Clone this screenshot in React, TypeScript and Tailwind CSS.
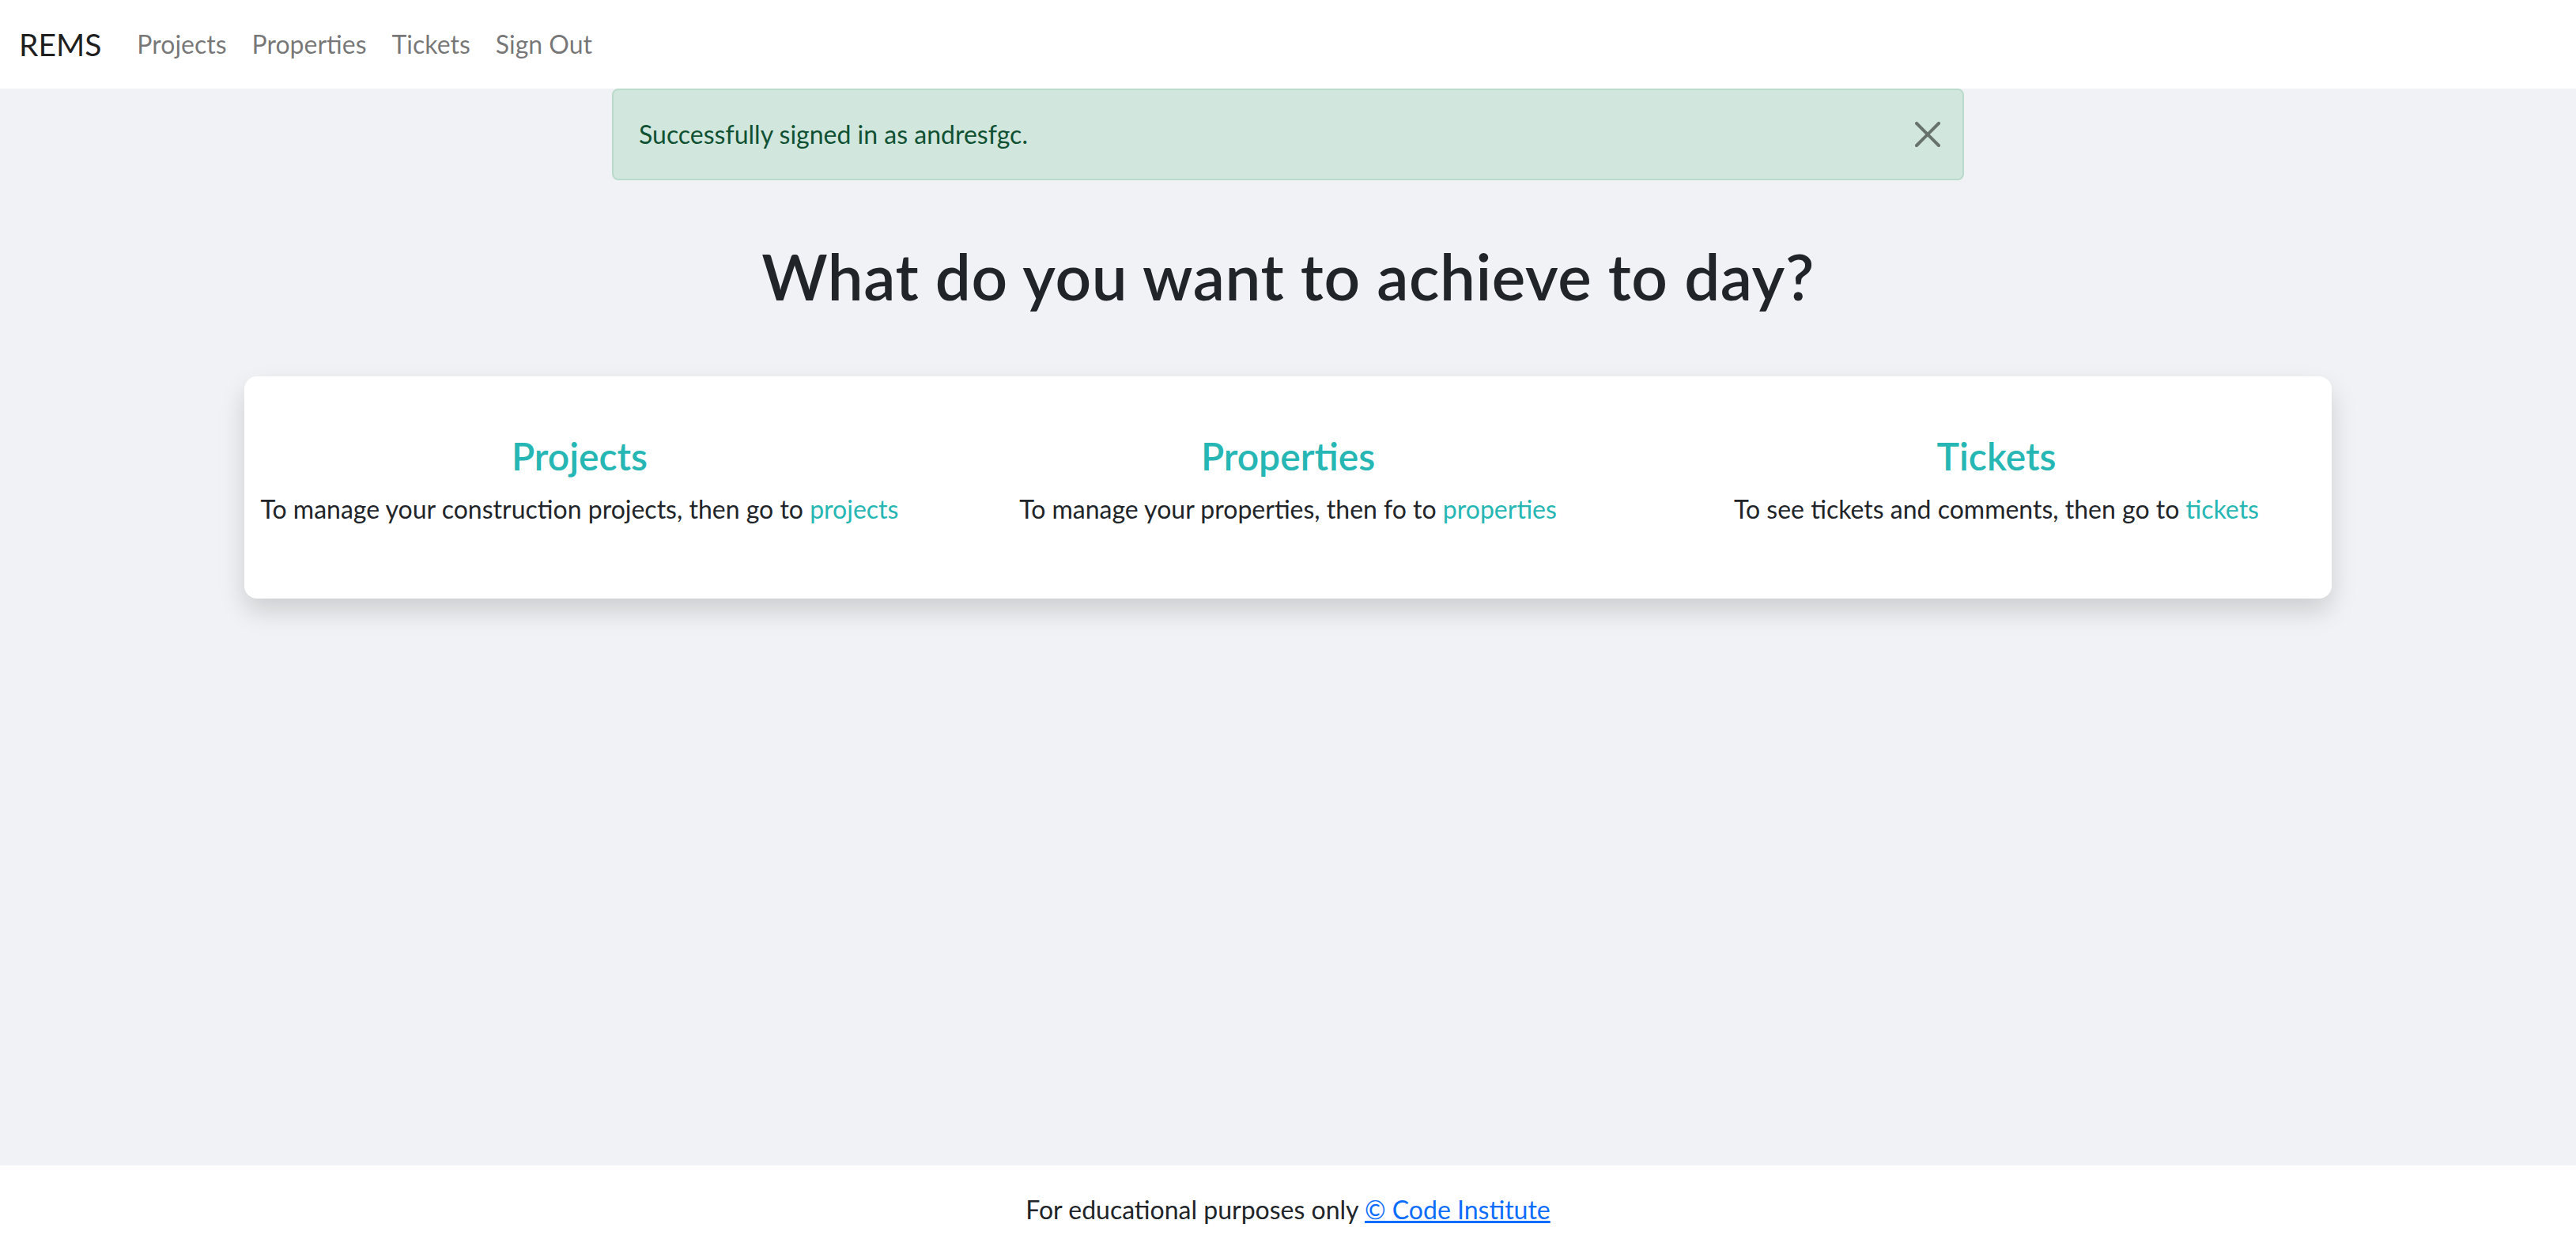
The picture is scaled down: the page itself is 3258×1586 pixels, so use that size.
import React from "react";

const font = { fontFamily: "Lato, 'Noto Sans', sans-serif" };

function CloseIcon() {
  return (
    <svg width="32" height="32" viewBox="0 0 16 16" className="opacity-50">
      <path
        fill="#000"
        d="M.293.293a1 1 0 0 1 1.414 0L8 6.586 14.293.293a1 1 0 1 1 1.414 1.414L9.414 8l6.293 6.293a1 1 0 0 1-1.414 1.414L8 9.414l-6.293 6.293a1 1 0 0 1-1.414-1.414L6.586 8 .293 1.707a1 1 0 0 1 0-1.414z"
      />
    </svg>
  );
}

const sections = [
  { title: "Projects", text: "To manage your construction projects, then go to ", link: "projects" },
  { title: "Properties", text: "To manage your properties, then fo to ", link: "properties" },
  { title: "Tickets", text: "To see tickets and comments, then go to ", link: "tickets" },
];

export default function App() {
  return (
    <div className="min-h-screen flex flex-col bg-[#f0f2f5] text-[#212529]" style={font}>
      <nav className="h-[112px] bg-white flex items-center px-[24px] shrink-0">
        <a className="text-[39px] leading-[60px] text-black/90 mr-[29px]">REMS</a>
        <div className="flex items-center">
          {["Projects", "Properties", "Tickets", "Sign Out"].map((l) => (
            <a key={l} className="px-[16px] text-[32px] leading-[48px] text-black/55">
              {l}
            </a>
          ))}
        </div>
      </nav>

      <main className="flex-1 flex flex-col items-center">
        <div className="w-[1710px] h-[116px] flex items-center justify-between border-2 border-[#badbcc] bg-[#d1e7dd] rounded-[8px] pl-[32px] pr-[28px]">
          <span className="text-[32px] leading-[48px] text-[#0f5132]">Successfully signed in as andresfgc.</span>
          <CloseIcon />
        </div>

        <h1 className="mt-[73px] text-center text-[80px] leading-[96px] tracking-[0.6px] font-semibold text-[#212529]">
          What do you want to achieve to day?
        </h1>

        <div className="mt-[79px] w-[2640px] bg-white rounded-[16px] shadow-[0_16px_32px_rgba(0,0,0,0.15)] pt-[72px] pb-[89px]">
          <div className="flex -mx-[24px]">
            {sections.map((s) => (
              <div key={s.title} className="flex-1 px-[24px] text-center">
                <h4 className="text-[48px] leading-[57.6px] font-semibold text-[#26b6b4] mb-[14px]">{s.title}</h4>
                <p className="text-[32px] leading-[48px] text-[#212529]">
                  {s.text}
                  <a className="text-[#26b6b4]">{s.link}</a>
                </p>
              </div>
            ))}
          </div>
        </div>
      </main>

      <footer className="bg-white py-[32px] text-center text-[32px] leading-[48px] text-[#212529] shrink-0">
        For educational purposes only{" "}
        <a className="text-[#0d6efd] underline">© Code Institute</a>
      </footer>
    </div>
  );
}
